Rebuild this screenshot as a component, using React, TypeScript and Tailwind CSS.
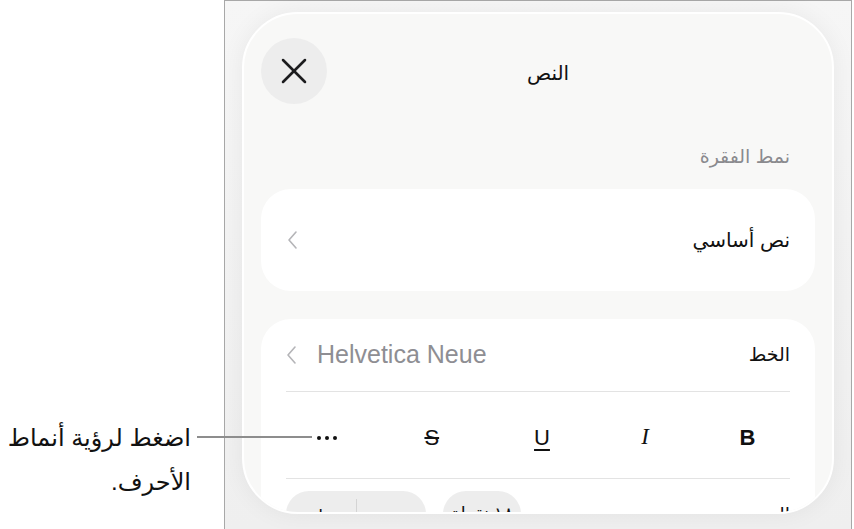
import { X } from "lucide-react";

const FONT = { fontFamily: '"Liberation Sans", "DejaVu Sans", sans-serif' };

function Chevron() {
  return (
    <svg width="12" height="20" viewBox="0 0 12 20" fill="none" className="shrink-0">
      <polyline points="9,2 2,10 9,18" stroke="#b5b5b8" strokeWidth="1.6" strokeLinecap="round" strokeLinejoin="round" />
    </svg>
  );
}

function StyleButtons() {
  return (
    <div className="grid grid-cols-5 h-[86px] items-center pt-[5px] -ml-[12px] -mr-[10px]" dir="ltr">
      <div className="flex justify-center gap-[4px]">
        <span className="w-[4px] h-[4px] rounded-full bg-[#111]" />
        <span className="w-[4px] h-[4px] rounded-full bg-[#111]" />
        <span className="w-[4px] h-[4px] rounded-full bg-[#111]" />
      </div>
      <div className="flex justify-center text-[22px] text-[#111] line-through decoration-[1.5px]">S</div>
      <div className="flex justify-center pl-[10px] text-[22px] text-[#111] underline underline-offset-[4px] decoration-[1.5px]">U</div>
      <div className="flex justify-center pl-[6px] text-[23px] text-[#111] italic" style={{ fontFamily: '"Liberation Serif", serif' }}>I</div>
      <div className="flex justify-center text-[22px] text-[#111] font-bold">B</div>
    </div>
  );
}

export default function App() {
  return (
    <div className="relative w-[854px] h-[529px] bg-white overflow-hidden flex" style={FONT}>
      {/* callout */}
      <div className="w-[224px] shrink-0 pt-[416px] pr-[33px]" dir="rtl">
        <p className="text-[24px] leading-[44px] text-[#111] whitespace-nowrap">
          اضغط لرؤية أنماط
          <br />
          الأحرف.
        </p>
      </div>
      <div className="absolute left-[197px] top-[436px] w-[115px] h-[2px] bg-[#8d8d8d] z-10" />

      {/* device frame */}
      <div className="w-[628px] h-[529px] border-l border-t border-r border-[#a8a8a8] bg-gradient-to-b from-[#f6f6f6] to-[#efefef] px-[17px] pt-[11px]">
        <div
          className="h-[502px] rounded-[56px] bg-[#f8f8f7] border-2 border-white shadow-[0_0_24px_rgba(0,0,0,0.06)] overflow-hidden px-[17px]"
          dir="rtl"
        >
          {/* header */}
          <div className="relative flex items-center justify-center h-[66px] mt-[24px]">
            <span className="text-[20px] font-medium text-[#111] mr-[-20px] pt-[3px]">النص</span>
            <div className="absolute left-0 top-0 w-[66px] h-[66px] rounded-full bg-[#ededed] flex items-center justify-center">
              <X size={44} strokeWidth={1.4} color="#1c1c1e" />
            </div>
          </div>

          <div className="pr-[25px] pt-[37px] pb-[16px] text-[19px] text-[#8a8a8e] leading-[32px]">نمط الفقرة</div>

          {/* paragraph style */}
          <div className="h-[102px] rounded-[30px] bg-white flex items-center justify-between pr-[25px] pl-[26px]">
            <span className="text-[20px] text-[#111]">نص أساسي</span>
            <Chevron />
          </div>

          {/* font card */}
          <div className="mt-[28px] rounded-[30px] bg-white px-[25px] pb-[40px]">
            <div className="h-[73px] flex items-center justify-between border-b border-[#e3e3e3]">
              <span className="text-[19px] text-[#111]">الخط</span>
              <div className="flex items-center gap-[19px]" dir="ltr">
                <Chevron />
                <span className="text-[25px] text-[#8e8e93]">Helvetica Neue</span>
              </div>
            </div>
            <div className="border-b border-[#e3e3e3]">
              <StyleButtons />
            </div>
            <div className="h-[60px] flex items-center justify-between pt-[12px]">
              <span className="text-[19px] text-[#111]">الحجم</span>
              <div className="flex items-center gap-[17px] self-start" dir="ltr">
                <div className="w-[140px] h-[46px] rounded-full bg-[#ededed] flex items-center">
                  <span className="flex-1 text-center text-[22px] text-[#111]">+</span>
                  <span className="w-px h-[30px] bg-[#d4d4d4]" />
                  <span className="flex-1 text-center text-[22px] text-[#111]">−</span>
                </div>
                <div className="w-[78px] h-[46px] rounded-full bg-[#ededed] flex items-center justify-center text-[18px] text-[#111]" dir="rtl">
                  ١٨ نقطة
                </div>
              </div>
            </div>
          </div>
        </div>
      </div>
    </div>
  );
}
